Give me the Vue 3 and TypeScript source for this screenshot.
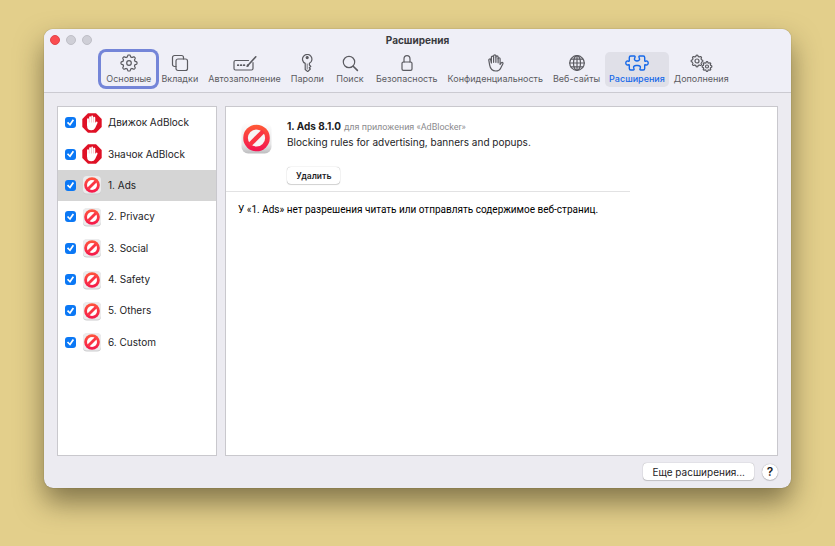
<script setup lang="ts">
import { ref } from 'vue'

interface Tab {
  id: string
  label: string
  width: number
}

interface Extension {
  name: string
  kind: 'hand' | 'block'
  enabled: boolean
}

const tabs: Tab[] = [
  { id: 'general', label: 'Основные', width: 18 },
  { id: 'tabs', label: 'Вкладки', width: 18 },
  { id: 'autofill', label: 'Автозаполнение', width: 24 },
  { id: 'passwords', label: 'Пароли', width: 18 },
  { id: 'search', label: 'Поиск', width: 18 },
  { id: 'security', label: 'Безопасность', width: 18 },
  { id: 'privacy', label: 'Конфиденциальность', width: 18 },
  { id: 'websites', label: 'Веб-сайты', width: 18 },
  { id: 'extensions', label: 'Расширения', width: 24 },
  { id: 'advanced', label: 'Дополнения', width: 24 },
]

const activeTab = ref('extensions')
const selected = ref(2)

const extensions = ref<Extension[]>([
  { name: 'Движок AdBlock', kind: 'hand', enabled: true },
  { name: 'Значок AdBlock', kind: 'hand', enabled: true },
  { name: '1. Ads', kind: 'block', enabled: true },
  { name: '2. Privacy', kind: 'block', enabled: true },
  { name: '3. Social', kind: 'block', enabled: true },
  { name: '4. Safety', kind: 'block', enabled: true },
  { name: '5. Others', kind: 'block', enabled: true },
  { name: '6. Custom', kind: 'block', enabled: true },
])

// Outline of a cog with eight rounded teeth.
function gear(cx: number, cy: number, radius: number, depth: number): string {
  const points: string[] = []
  for (let i = 0; i < 128; i++) {
    const a = (i / 128) * Math.PI * 2
    const wave = Math.max(-1, Math.min(1, Math.cos(a * 8) * 1.7))
    const r = radius + depth * wave
    points.push(`${(cx + r * Math.cos(a)).toFixed(2)} ${(cy + r * Math.sin(a)).toFixed(2)}`)
  }
  return `M${points.join('L')}Z`
}

const largeGear = gear(9, 9, 7.1, 0.9)
const mediumGear = gear(8, 7, 5.2, 0.6)
const smallGear = gear(18, 12.5, 4.3, 0.5)
</script>

<template>
  <div class="desktop">
    <main class="window">
      <header class="head">
        <div class="titlebar">
          <div class="lights">
            <button class="light close" type="button" aria-label="Закрыть"></button>
            <button class="light" type="button" aria-label="Свернуть"></button>
            <button class="light" type="button" aria-label="Развернуть"></button>
          </div>
          <h1>Расширения</h1>
        </div>
        <nav class="tabs">
          <button
            v-for="tab in tabs"
            :key="tab.id"
            type="button"
            class="tab"
            :class="{ active: activeTab === tab.id, focused: tab.id === 'general' }"
            @click="activeTab = tab.id"
          >
            <svg class="tab-icon" :width="tab.width" height="18" :viewBox="`0 0 ${tab.width} 18`" aria-hidden="true">
              <template v-if="tab.id === 'general'">
                <path :d="largeGear" />
                <circle cx="9" cy="9" r="2.3" />
              </template>
              <template v-else-if="tab.id === 'tabs'">
                <path d="M5 12.5H3.5a2 2 0 0 1-2-2v-7a2 2 0 0 1 2-2h7a2 2 0 0 1 2 2V5" />
                <rect x="5" y="5" width="11.5" height="11.5" rx="2" />
              </template>
              <template v-else-if="tab.id === 'autofill'">
                <path d="M15.5 6.5h-13A1.5 1.5 0 0 0 1 8v6.500A1.500 1.500 0 0 0 2.500 16h16a1.500 1.500 0 0 0 1.500-1.500v-6" />
                <path d="M15 11.300 22.800 2.800" stroke-width="1.6" />
                <path d="m14 12.500.5-1.600 1 .9Z" fill="currentColor" />
                <path d="M4.800 11.200h.6M7.800 11.200h.6M10.800 11.200h.6" stroke-width="1.8" />
              </template>
              <template v-else-if="tab.id === 'passwords'">
                <path d="M7.200 9.400a4.700 4.700 0 1 1 4.200-.1v1.700l1.400 1.400-1.500 1.400 1 1.200-2.600 2.600-2.500-2.100Z" />
                <circle cx="9.200" cy="3.600" r="1" fill="currentColor" />
                <path d="M9.200 10v5" stroke-width="0.8" />
              </template>
              <template v-else-if="tab.id === 'search'">
                <circle cx="8" cy="8" r="5.700" />
                <path d="m12.200 12.200 4.200 4.200" stroke-width="1.6" />
              </template>
              <template v-else-if="tab.id === 'security'">
                <rect x="4" y="8" width="10" height="8.400" rx="1.400" />
                <path d="M6 8V5a3 3.400 0 0 1 6 0V8" />
              </template>
              <template v-else-if="tab.id === 'privacy'">
                <path
                  d="M3.600 10.800 2.800 6.200c-.2-1.400 1.600-1.700 1.900-.4L5.400 9V3.300c0-1.500 2.200-1.500 2.200 0V2c0-1.500 2.300-1.500 2.300 0v1c0-1.400 2.200-1.400 2.200 0v1.700c0-1.300 2-1.300 2 0v5.800l1.100-1.500c.9-1.200 2.200-.3 1.600.9l-2.300 4.600c-.9 1.800-2.200 2.500-4.600 2.500-3.700 0-5.600-2.200-6.300-6.200Z"
                />
                <path d="M7.600 3.300v5M9.900 3v5.300M12.100 4.500V8.800" />
              </template>
              <template v-else-if="tab.id === 'websites'">
                <circle cx="9" cy="9" r="7.300" />
                <ellipse cx="9" cy="9" rx="3.500" ry="7.300" />
                <path d="M9 1.700v14.600M1.700 9h14.600M3 5.100h12M3 12.900h12" />
              </template>
              <template v-else-if="tab.id === 'extensions'">
                <path
                  stroke-width="1.4"
                  d="M4.300 6.600V3.500c0-.9.600-1.500 1.500-1.500h3.400c.8 0 1.100.6.800 1.300l-.5 1.400c-.4 1.300.8 2.300 2.500 2.300s2.900-1 2.500-2.300L14 3.300c-.3-.7 0-1.300.8-1.300h3.400c.9 0 1.500.6 1.500 1.500v3.100c0 .7.500.9 1 .6 1.300-.7 2.500.2 2.500 1.800s-1.200 2.500-2.500 1.800c-.5-.3-1-.1-1 .6v3.100c0 .9-.6 1.500-1.500 1.500h-2.400c-.8 0-1.100-.6-.8-1.300l.4-1.100c.3-1.200-.9-2.100-2.400-2.100h-2c-1.500 0-2.700.9-2.400 2.100l.4 1.100c.3.700 0 1.300-.8 1.300H5.800c-.9 0-1.500-.6-1.500-1.500v-3.100c0-.7-.5-.9-1-.6C2 11.500.8 10.600.8 9S2 6.500 3.300 7.200c.5.300 1 .1 1-.6Z"
                />
              </template>
              <template v-else>
                <path :d="mediumGear" />
                <circle cx="8" cy="7" r="2" />
                <path :d="smallGear" />
                <circle cx="18" cy="12.500" r="1.500" />
              </template>
            </svg>
            <span>{{ tab.label }}</span>
          </button>
        </nav>
      </header>

      <div class="content">
        <ul class="list">
          <li
            v-for="(item, i) in extensions"
            :key="item.name"
            class="row"
            :class="{ selected: selected === i }"
            @click="selected = i"
          >
            <input :id="`ext-${i}`" v-model="item.enabled" type="checkbox" />
            <svg v-if="item.kind === 'hand'" class="row-icon" viewBox="0 0 20 20" aria-hidden="true">
              <path d="M6 .3h8L19.700 6v8L14 19.700H6L.3 14V6Z" fill="#df1025" />
              <g stroke="#fff" stroke-width="1.9" stroke-linecap="round" stroke-linejoin="round">
                <path d="M6 6.200V12M8.100 4.200V11M10.200 3.500V11M12.300 4.800V12" />
                <path d="M6 10.500h6.300v2l2.300-3-2.300 5c-.6 1.300-1.400 1.900-2.800 1.900-2.400 0-3.500-1.400-3.500-3.900Z" fill="#fff" />
              </g>
            </svg>
            <svg v-else class="row-icon" viewBox="0 0 20 20" aria-hidden="true">
              <defs>
                <linearGradient :id="`red-${i}`" x1="0" y1="0" x2="0" y2="1">
                  <stop offset="0" stop-color="#ff563c" />
                  <stop offset="1" stop-color="#f5164c" />
                </linearGradient>
              </defs>
              <rect x="1" y="1.500" width="18" height="18" rx="4" fill="#cbcbcd" />
              <rect x="1" y="1" width="18" height="17.500" rx="4" fill="#ececed" />
              <circle cx="10" cy="10" r="7.800" :fill="`url(#red-${i})`" />
              <circle cx="10" cy="10" r="5" fill="#fff" />
              <path d="m6.200 13.800 7.600-7.600" stroke="#fa3443" stroke-width="2.800" />
            </svg>
            <label :for="`ext-${i}`">{{ item.name }}</label>
          </li>
        </ul>

        <section class="detail">
          <div class="summary">
            <svg class="app-icon" viewBox="0 0 32 34" aria-hidden="true">
              <defs>
                <linearGradient id="tile" x1="0" y1="0" x2="0" y2="1">
                  <stop offset="0" stop-color="#ffffff" />
                  <stop offset="0.700" stop-color="#e6e6e7" />
                  <stop offset="1" stop-color="#bdbdbf" />
                </linearGradient>
                <linearGradient id="ring" x1="0" y1="0" x2="0" y2="1">
                  <stop offset="0" stop-color="#ff5a36" />
                  <stop offset="1" stop-color="#f41350" />
                </linearGradient>
              </defs>
              <rect x="0.500" y="1" width="31" height="32" rx="7" fill="url(#tile)" />
              <circle cx="16" cy="17" r="13.700" fill="url(#ring)" />
              <circle cx="16" cy="17" r="8.900" fill="#f6f5f6" />
              <path d="m9 24 14-14" stroke="#fa3443" stroke-width="4.600" />
            </svg>
            <div class="info">
              <p class="name"><strong>1. Ads 8.1.0</strong> <span>для приложения «AdBlocker»</span></p>
              <p class="description">Blocking rules for advertising, banners and popups.</p>
              <button class="push small" type="button">Удалить</button>
            </div>
          </div>
          <p class="permission">У «1. Ads» нет разрешения читать или отправлять содержимое веб-страниц.</p>
        </section>
      </div>

      <footer class="foot">
        <button class="push" type="button">Еще расширения...</button>
        <button class="help" type="button" aria-label="Справка">?</button>
      </footer>
    </main>
  </div>
</template>

<style>
body {
  margin: 0;
}
</style>

<style scoped>
* {
  box-sizing: border-box;
}

.desktop {
  display: flex;
  min-height: 100vh;
  padding: 29px 44px 58px;
  background: #e3cf8b;
  color: #1d1d1f;
  font-family: Inter, 'Liberation Sans', sans-serif;
  font-size: 10px;
}

button {
  margin: 0;
  padding: 0;
  border: 0;
  background: none;
  color: inherit;
  font: inherit;
}

.window {
  display: flex;
  flex: 1;
  flex-direction: column;
  min-width: 0;
  border-radius: 9px;
  background: #ecebf1;
  box-shadow: 0 0 1px rgba(60, 50, 10, 0.6), 0 14px 28px rgba(50, 42, 20, 0.55);
}

.head {
  padding-bottom: 5px;
  border-bottom: 1px solid #cbcad1;
  border-radius: 9px 9px 0 0;
  background: #efeff7;
}

.titlebar {
  display: grid;
  grid-template-columns: 1fr auto 1fr;
  align-items: center;
  height: 23px;
  padding: 0 6px 1px;
}

.lights {
  display: flex;
  gap: 6px;
}

.light {
  width: 10px;
  height: 10px;
  border: 1px solid #bfbfc7;
  border-radius: 50%;
  background: #cfcfd7;
}

.close {
  border-color: #e2444a;
  background: #fb4c50;
}

h1 {
  margin: 0;
  color: #3a3a3e;
  font-size: 10px;
  font-weight: 700;
}

.tabs {
  display: flex;
  justify-content: center;
}

.tab {
  display: flex;
  flex-direction: column;
  align-items: center;
  gap: 1px;
  min-width: 42px;
  height: 35px;
  padding: 2px 5px 0;
  border-radius: 5px;
  color: #5b5b61;
  font-size: 9px;
  line-height: 12px;
  white-space: nowrap;
}

.tab-icon {
  fill: none;
  stroke: currentColor;
  stroke-width: 1.2;
  stroke-linecap: round;
  stroke-linejoin: round;
}

.tab.active {
  padding: 2px 4px 0;
  background: #e0e0e8;
  color: #1668e8;
  font-weight: 500;
}

.tab.focused {
  height: 34px;
  box-shadow: 0 0 0 3px #7485d8;
}

.content {
  display: grid;
  flex: 1;
  grid-template-columns: 160px 1fr;
  gap: 8px;
  padding: 13px 13px 0;
}

.list,
.detail {
  border: 1px solid #c9c8cd;
  background: #fff;
}

.list {
  display: grid;
  grid-template-rows: repeat(8, 1fr);
  height: 100%;
  margin: 0;
  padding: 0 0 97px;
  list-style: none;
}

.row {
  display: flex;
  align-items: center;
  gap: 6px;
  padding: 0 7px;
}

.row.selected {
  background: #d5d5d5;
}

.row input {
  display: grid;
  place-items: center;
  width: 11px;
  height: 11px;
  margin: 0;
  border-radius: 3px;
  background: #cfcfd4;
  appearance: none;
}

.row input:checked {
  background: #0b78f5;
}

.row input:checked::after {
  width: 9px;
  height: 9px;
  background: #fff;
  clip-path: polygon(10% 53%, 24% 40%, 42% 60%, 74% 12%, 90% 23%, 46% 88%);
  content: '';
}

.row-icon {
  width: 20px;
  height: 20px;
}

.row label {
  padding-bottom: 1px;
}

.summary {
  display: flex;
  gap: 15px;
  max-width: 404px;
  padding: 14px 0 7px 15px;
  border-bottom: 1px solid #e2e2e3;
}

.app-icon {
  flex: none;
  width: 31px;
  height: 34px;
}

p {
  margin: 0;
}

.name {
  line-height: 11px;
}

.name strong {
  font-weight: 700;
}

.name span {
  color: #8b8b8e;
  font-family: Roboto, sans-serif;
  font-size: 9px;
}

.description {
  margin: 2px 0 18px;
  line-height: 14px;
}

.permission {
  padding: 11px 12px;
  color: #000;
  font-family: Roboto, sans-serif;
  line-height: 14px;
}

.push {
  height: 17px;
  padding: 0 9px;
  border-radius: 4px;
  background: #fff;
  box-shadow: 0 0 1px rgba(0, 0, 0, 0.4), 0 1px 1px rgba(0, 0, 0, 0.15);
}

.push.small {
  font-family: Roboto, sans-serif;
  font-size: 9px;
  font-weight: 500;
}

.foot {
  display: flex;
  align-items: center;
  justify-content: flex-end;
  gap: 8px;
  height: 32px;
  padding: 0 13px 1px;
}

.help {
  width: 16px;
  height: 16px;
  border-radius: 50%;
  background: #fff;
  box-shadow: 0 0 1px rgba(0, 0, 0, 0.4), 0 1px 1px rgba(0, 0, 0, 0.15);
  font-size: 12px;
  font-weight: 600;
  line-height: 16px;
}
</style>
